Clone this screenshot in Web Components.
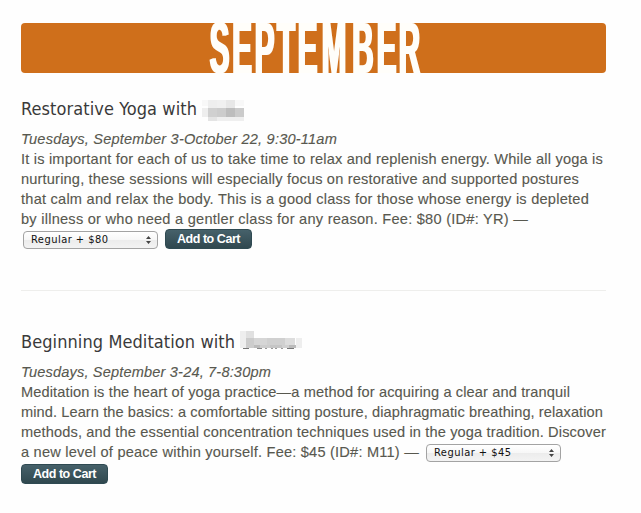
<!DOCTYPE html>
<html lang="en">
<head>
<meta charset="utf-8">
<title>September classes</title>
<style>
html,body{margin:0;background:#fefefe}
body{width:641px;height:513px;overflow:hidden;font-family:"Liberation Sans",Arial,sans-serif;color:#58584f}
</style>
</head>
<body>
<class-schedule>
  <month-banner>SEPTEMBER</month-banner>
  <class-entry>
    <span slot="title">Restorative Yoga with</span>
    <hidden-name slot="name" kind="a"></hidden-name>
    <text-line slot="when" fit="316">Tuesdays, September 3-October 22, 9:30-11am</text-line>
    <text-line fit="582">It is important for each of us to take time to relax and replenish energy. While all yoga is</text-line>
    <text-line fit="558">nurturing, these sessions will especially focus on restorative and supported postures</text-line>
    <text-line fit="568">that calm and relax the body. This is a good class for those whose energy is depleted</text-line>
    <text-line fit="507">by illness or who need a gentler class for any reason. Fee: $80 (ID#: YR) —</text-line>
    <div slot="actions" style="display:flex;gap:7px;padding-left:2px"><price-select>Regular + $80</price-select><cart-button>Add to Cart</cart-button></div>
  </class-entry>
  <class-entry>
    <span slot="title">Beginning Meditation with</span>
    <hidden-name slot="name" kind="b"></hidden-name>
    <text-line slot="when" fit="250">Tuesdays, September 3-24, 7-8:30pm</text-line>
    <text-line fit="549">Meditation is the heart of yoga practice—a method for acquiring a clear and tranquil</text-line>
    <text-line fit="582">mind. Learn the basics: a comfortable sitting posture, diaphragmatic breathing, relaxation</text-line>
    <text-line fit="585">methods, and the essential concentration techniques used in the yoga tradition. Discover</text-line>
    <div style="display:flex;gap:7px;padding-bottom:2px"><text-line fit="398">a new level of peace within yourself. Fee: $45 (ID#: M11) —</text-line><price-select>Regular + $45</price-select></div>
    <cart-button slot="actions">Add to Cart</cart-button>
  </class-entry>
</class-schedule>
<script>
class Base extends HTMLElement {
  constructor(){ super(); this.attachShadow({mode:'open'}).innerHTML = this.constructor.markup; }
}

customElements.define('class-schedule', class extends Base {
  static markup = `<style>:host{display:block;box-sizing:border-box;width:641px;padding:23px 35px 0 21px}
  ::slotted(class-entry:last-child){margin-top:41px;border-top:1px solid #eeeeec;padding-top:36px}</style><slot></slot>`;
});

customElements.define('month-banner', class extends Base {
  static markup = `<style>:host{display:block;height:50px;border-radius:4px;background:#cf6f1b}
  svg{display:block;overflow:visible}text{font-family:"Liberation Sans",sans-serif;font-weight:bold;font-size:72px;text-anchor:middle;fill:#fffefa}</style>
  <svg width="585" height="50"><filter id="widen" filterUnits="userSpaceOnUse" x="150" y="-5" width="290" height="60" color-interpolation-filters="sRGB"><feMorphology operator="dilate" radius="1 0"/></filter>
  <g filter="url(#widen)"><text y="0" x="484.1 539 593.9 646.3 698.8 763.4 834.1 891.5 947.6" transform="translate(0 49.8) scale(.41 1)"></text></g></svg>`;
  connectedCallback(){ this.shadowRoot.querySelector('text').textContent = this.textContent.trim(); }
});

customElements.define('class-entry', class extends Base {
  static markup = `<style>
  :host{display:block;padding-top:21px}
  h2{display:flex;gap:5px;margin:0;height:30px;font:18px/30px "DejaVu Sans Condensed","DejaVu Sans",sans-serif;font-stretch:condensed;letter-spacing:.08px;color:#3a3a3a;white-space:nowrap}
  .when{height:20px;margin-top:5px;font-style:italic}
  .actions{height:20px}</style>
  <h2><slot name="title"></slot><slot name="name"></slot></h2>
  <div class="when"><slot name="when"></slot></div>
  <slot></slot>
  <div class="actions"><slot name="actions"></slot></div>`;
});

customElements.define('text-line', class extends Base {
  static markup = `<style>:host{display:block;height:20px;font-size:14.6px;line-height:20px;white-space:nowrap;-webkit-text-stroke:.12px #58584f}span{display:inline-block}</style><span><slot></slot></span>`;
  connectedCallback(){
    const s = this.shadowRoot.querySelector('span');
    const extra = this.getAttribute('fit') - s.getBoundingClientRect().width;
    s.style.letterSpacing = extra / this.textContent.length + 'px';
  }
});

customElements.define('hidden-name', class extends Base {
  static markup = `<style>:host{display:block;height:30px}svg{display:block}</style>`;
  connectedCallback(){
    const rects = {
      a: [[-1,6,43,6,'#f8f8f8'],[6,6,9,9,'#eeeeee'],[15,6,9,9,'#f0f0f0'],[24,6,9,9,'#e7e7e7'],[0,14,6,9,'#eeeeee'],[6,14,9,9,'#d0d0d0'],[15,14,9,9,'#cccccc'],[24,14,9,9,'#bdbdbd'],[33,14,9,9,'#cbcbcb'],[6,23,9,4,'#e4e4e4'],[15,23,27,4,'#efefef']],
      b: [[0,4,6,17,'#eeeeee'],[6,4,8,7,'#e0e0e0'],[6,11,8,10,'#cccccc'],[14,11,13,7,'#d6d6d6'],[27,11,18,7,'#d0d0d0'],[45,11,10,7,'#dddddd'],[14,18,6,3,'#bbbbbb'],[20,18,10,3,'#cdcdcd'],[30,18,12,3,'#c5c5c5'],[42,18,7,3,'#d0d0d0'],[49,18,7,3,'#bbbbbb'],[56,11,6,10,'#eeeeee'],[3,21,6,1,'#777777'],[17,21,5,1,'#888888'],[25,21,2,1,'#999999'],[31,21,2,1,'#999999'],[35,21,2,1,'#999999'],[41,21,2,1,'#999999'],[47,21,7,1,'#777777']]
    }[this.getAttribute('kind')];
    this.shadowRoot.innerHTML += '<svg width="64" height="30" shape-rendering="crispEdges">' + rects.map(([x,y,w,h,c]) => `<rect x="${x}" y="${y}" width="${w}" height="${h}" fill="${c}"/>`).join('') + '</svg>';
  }
});

customElements.define('price-select', class extends Base {
  static markup = `<style>:host{display:flex;align-items:center;justify-content:space-between;box-sizing:border-box;flex:none;width:135px;height:18px;margin-top:2px;padding:0 6px 0 7px;border:1px solid #a3a3a3;border-radius:4px;background:linear-gradient(#fff,#f7f7f7 48%,#ececec 52%,#f3f3f3);font:11px/16px "DejaVu Sans Condensed","DejaVu Sans",sans-serif;color:#111;white-space:nowrap;letter-spacing:.47px}
  svg{display:block}</style><span><slot></slot></span><svg width="5" height="8" viewBox="0 0 5 8"><path d="M0 3 2.5 0 5 3zM0 5h5L2.5 8z" fill="#444"/></svg>`;
});

customElements.define('cart-button', class extends Base {
  static markup = `<style>:host{display:flex;align-items:center;justify-content:center;box-sizing:border-box;width:87px;height:20px;border:1px solid #2f4a52;border-radius:4px;background:linear-gradient(#46616a,#30484f);color:#fff;font:bold 12.5px/20px "Liberation Sans",Arial,sans-serif;letter-spacing:-.45px;white-space:nowrap}</style><slot></slot>`;
});
</script>
</body>
</html>
